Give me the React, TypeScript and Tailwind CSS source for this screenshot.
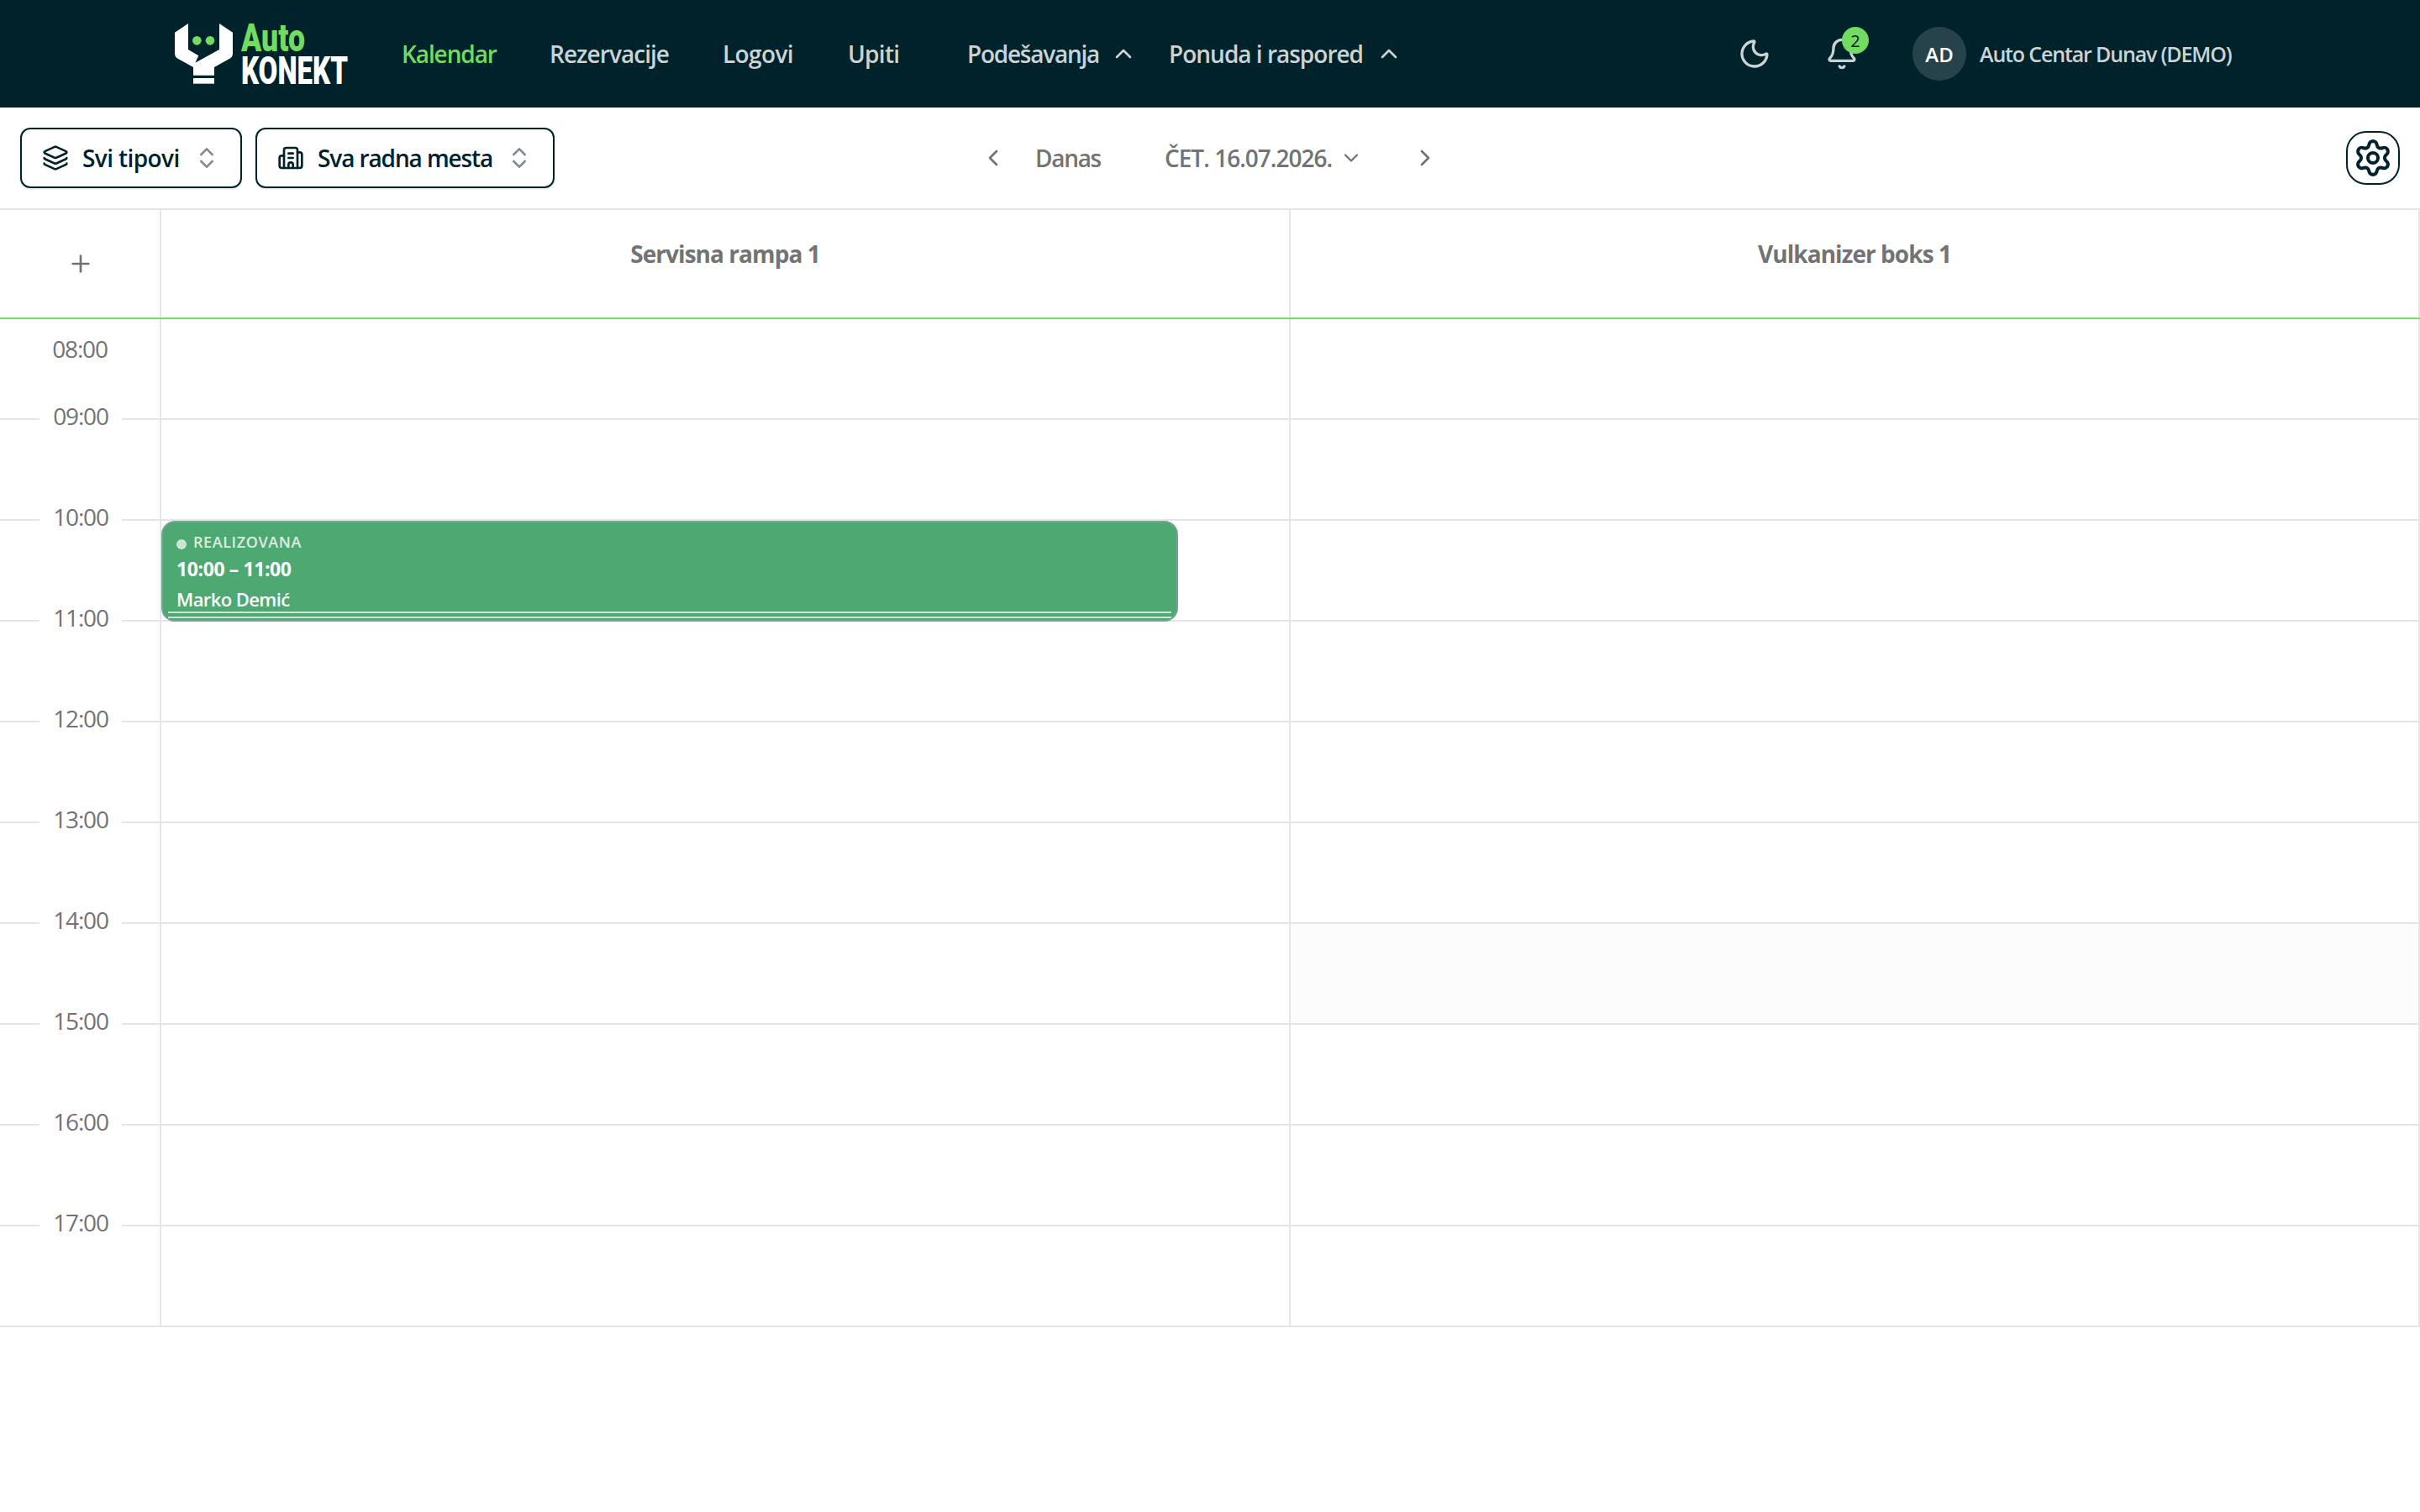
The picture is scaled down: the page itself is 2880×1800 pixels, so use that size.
import {
    Bell,
    Building2,
    ChevronDown,
    ChevronLeft,
    ChevronRight,
    ChevronsUpDown,
    ChevronUp,
    Layers,
    Moon,
    Plus,
    Settings,
} from "lucide-react";

const hours = ["08:00", "09:00", "10:00", "11:00", "12:00", "13:00", "14:00", "15:00", "16:00", "17:00"];

const navLinks = [
    { label: "Kalendar", className: "w-[176px] text-[#72db61] tracking-[-1.1px]" },
    { label: "Rezervacije", className: "w-[206px] tracking-[-0.95px]" },
    { label: "Logovi", className: "w-[149px] tracking-[-0.6px]" },
    { label: "Upiti", className: "w-[142px] tracking-[-0.7px]" },
];

function Logo() {
    return (
        <svg className="w-[207px] h-[72px] shrink-0 overflow-visible" viewBox="0 0 207 72">
            <g transform="scale(0.3333) translate(-84 -84)">
                <path
                    fill="#fff"
                    d="M132 84 84 116V192Q84 203 92 208L150 240V269H225V240L283 208Q291 203 291 192V116L243 84V177L157 224 169 199 132 177Z"
                />
                <path fill="#fff" d="M150 279H225V299H150Z" />
                <circle cx="163" cy="145" r="16" fill="#72db61" />
                <circle cx="210" cy="145" r="16" fill="#72db61" />
            </g>
            <text
                x="79" y="33" textLength="76" lengthAdjust="spacingAndGlyphs"
                className="fill-[#72db61] font-[Roboto] font-black text-[46px]"
            >
                Auto
            </text>
            <text
                x="79" y="71.5" textLength="127" lengthAdjust="spacingAndGlyphs"
                className="fill-white font-[Roboto] font-black text-[47px]"
            >
                KONEKT
            </text>
        </svg>
    );
}

function Header() {
    return (
        <header className="h-32 bg-[#00222b] flex items-center pl-[208px] text-[#ccd3d5] text-[28px] font-semibold">
            <Logo />
            <nav className="flex items-center pl-[63px] whitespace-nowrap">
                {navLinks.map((link) => (
                    <a key={link.label} className={`shrink-0 ${link.className}`}>{link.label}</a>
                ))}
                <button className="flex items-center justify-between w-[202px] tracking-[-1.25px]">
                    Podešavanja
                    <ChevronUp className="w-8 h-8" />
                </button>
                <button className="flex items-center justify-between w-[278px] ml-[38px] tracking-[-1px]">
                    Ponuda i raspored
                    <ChevronUp className="w-8 h-8" />
                </button>
            </nav>
            <div className="flex items-center ml-auto w-[812px]">
                <Moon className="w-10 h-10" />
                <div className="relative ml-16">
                    <Bell className="w-10 h-10" />
                    <span className="absolute left-5 -top-3 w-8 h-8 rounded-full bg-[#72db61] text-[#00222b] text-[20px] font-medium flex items-center justify-center pt-0.5">
                        2
                    </span>
                </div>
                <div className="w-16 h-16 ml-16 pt-0.5 rounded-full bg-[#26434b] text-white text-[24px] flex items-center justify-center">
                    AD
                </div>
                <span className="ml-4 pt-0.5 text-[25px] whitespace-nowrap tracking-[-1.15px]">Auto Centar Dunav (DEMO)</span>
            </div>
        </header>
    );
}

function Toolbar() {
    return (
        <div className="h-[122px] border-b-2 border-[#e5e5e5] grid grid-cols-[1fr_auto_1fr] items-center px-6 text-[28px] font-semibold whitespace-nowrap">
            <div className="flex items-center gap-4 text-[#00222b]">
                <button className="flex items-center w-[264px] h-[72px] border-2 border-[#00222b] rounded-xl px-6 shadow-sm">
                    <Layers className="w-8 h-8" />
                    <span className="ml-4 tracking-[-0.6px]">Svi tipovi</span>
                    <ChevronsUpDown className="w-8 h-8 ml-auto opacity-50" />
                </button>
                <button className="flex items-center w-[356px] h-[72px] border-2 border-[#00222b] rounded-xl px-6 shadow-sm">
                    <Building2 className="w-8 h-8" />
                    <span className="ml-4 tracking-[-1.1px]">Sva radna mesta</span>
                    <ChevronsUpDown className="w-8 h-8 ml-auto opacity-50" />
                </button>
            </div>
            <div className="flex items-center w-[548px] pr-0.5 text-[#737373]">
                <ChevronLeft className="w-8 h-8" />
                <span className="w-[154px] ml-[34px] tracking-[-1.3px]">Danas</span>
                <span className="w-[208px] tracking-[-1px]">ČET. 16.07.2026.</span>
                <ChevronDown className="w-7 h-7" />
                <ChevronRight className="w-8 h-8 ml-auto" />
            </div>
            <button className="justify-self-end w-16 h-16 rounded-3xl border-2 border-[#00222b] text-[#00222b] flex items-center justify-center">
                <Settings className="w-12 h-12 shrink-0" />
            </button>
        </div>
    );
}

function TimeRow({ hour, first }: { hour: string; first: boolean }) {
    return (
        <div className="h-[120px] flex items-start">
            {first ? (
                <span className="w-full text-center mt-4 leading-[38px]">{hour}</span>
            ) : (
                <div className="w-full flex items-center justify-between -mt-6">
                    <span className="w-[47px] h-0.5 mt-2 bg-[#e5e5e5]" />
                    <span className="leading-[38px]">{hour}</span>
                    <span className="w-[45px] h-0.5 mt-2 bg-[#e5e5e5]" />
                </div>
            )}
        </div>
    );
}

function Booking() {
    return (
        <div className="absolute left-0 top-0 z-10 w-[1210px] h-[120px] rounded-2xl border-2 border-[#7ba294] bg-[#4ea871] text-white px-4 overflow-hidden">
            <div className="flex items-center gap-2 mt-[11px] h-6 text-[18px] font-semibold tracking-[0.6px]">
                <span className="w-3 h-3 mt-1.5 rounded-full bg-white/70" />
                <span className="opacity-80">REALIZOVANA</span>
            </div>
            <div className="mt-1 text-[23px] leading-8 font-bold tracking-[-0.4px]">10:00 – 11:00</div>
            <div className="mt-1 text-[22px] leading-8 font-semibold tracking-[-0.6px]">Marko Demić</div>
            <div className="absolute inset-x-1.5 bottom-0.5 h-2 border-y-2 border-white/70" />
        </div>
    );
}

interface ColumnProps {
    title: string;
    hovered?: string;
    children?: React.ReactNode;
}

function Column({ title, hovered, children }: ColumnProps) {
    return (
        <section className="w-[1344px]">
            <h2 className="h-[128px] pt-[31px] border-r-2 border-[#e5e5e5] text-center text-[28px] leading-[42px] font-bold tracking-[-0.95px]">
                {title}
            </h2>
            <div className="h-0.5 bg-[#72db61]" />
            {hours.map((hour) => (
                <div
                    key={hour}
                    className={`relative h-[120px] border-b-2 border-r-2 border-[#e5e5e5] ${hour === hovered ? "bg-[#fcfcfc]" : ""}`}
                >
                    {hour === "10:00" && children}
                </div>
            ))}
        </section>
    );
}

export default function App() {
    return (
        <div className="w-[2880px] h-[1800px] bg-white overflow-hidden font-['Open_Sans','Noto_Sans',sans-serif]">
            <Header />
            <Toolbar />
            <main className="flex text-[#737373]">
                <aside className="w-48 text-[28px]">
                    <div className="h-[128px] border-r-2 border-[#e5e5e5] flex items-center justify-center pl-0.5">
                        <Plus className="w-8 h-8" />
                    </div>
                    <div className="h-0.5 bg-[#72db61]" />
                    <div className="h-[1200px] border-r-2 border-b-2 border-[#e5e5e5] tracking-[-1.2px]">
                        {hours.map((hour, i) => (
                            <TimeRow key={hour} hour={hour} first={i === 0} />
                        ))}
                    </div>
                </aside>
                <Column title="Servisna rampa 1">
                    <Booking />
                </Column>
                <Column title="Vulkanizer boks 1" hovered="14:00" />
            </main>
        </div>
    );
}
